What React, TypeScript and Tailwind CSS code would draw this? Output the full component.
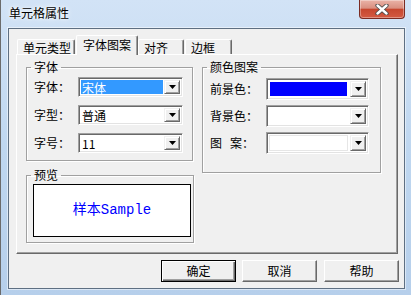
import type { ReactNode } from 'react';

const DropButton = () => (
  <div className="w-[16px] h-full flex items-center justify-center bg-[#f0f0f0] border border-t-[#f0f0f0] border-l-[#f0f0f0] border-r-[#696969] border-b-[#696969] shadow-[inset_1px_1px_0_#fff,inset_-1px_-1px_0_#a0a0a0]">
    <svg width="7" height="4" viewBox="0 0 7 4">
      <polygon points="0,0 7,0 3.5,4" fill="#000" />
    </svg>
  </div>
);

const Combo = ({ children, height }: { children?: ReactNode; height: string }) => (
  <div
    className={`${height} flex-1 flex bg-white p-[2px] border border-t-[#a0a0a0] border-l-[#a0a0a0] border-r-white border-b-white shadow-[inset_1px_1px_0_#696969,inset_-1px_-1px_0_#e3e3e3]`}
  >
    <div className="flex-1 min-w-0 flex">{children}</div>
    <DropButton />
  </div>
);

const Group = ({ title, className, children }: { title: string; className: string; children?: ReactNode }) => (
  <fieldset className={`${className} border border-[#a0a0a0] shadow-[inset_1px_1px_0_#fff,1px_1px_0_#fff]`}>
    <legend className="ml-[4px] px-[3px] leading-[14px]">{title}</legend>
    {children}
  </fieldset>
);

const Button = ({ label, primary }: { label: string; primary?: boolean }) => (
  <button
    className={`w-[75px] h-[22px] flex items-center justify-center leading-[14px] bg-[#f0f0f0] border ${
      primary
        ? 'border-black shadow-[inset_1px_1px_0_#fff,inset_-1px_-1px_0_#696969,inset_-2px_-2px_0_#a0a0a0]'
        : 'border-t-white border-l-white border-r-[#696969] border-b-[#696969] shadow-[inset_-1px_-1px_0_#a0a0a0]'
    }`}
  >
    {label}
  </button>
);

const tabBase =
  'h-[15px] pl-[5px] pt-[2px] leading-[12px] border border-b-0 border-t-white border-l-white border-r-[#696969] rounded-t-[2px] shadow-[inset_-1px_0_0_#a0a0a0]';

export default function App() {
  return (
    <div className="w-[411px] h-[295px] overflow-hidden bg-gradient-to-b from-[#d2e3f6] via-[#bfd7f0] to-[#b6cfeb] border-l border-[#6b6b6b] text-[12px] text-black font-['Noto_Sans_CJK_SC','Noto_Sans',sans-serif]">
      {/* Title bar */}
      <div className="h-[27px] flex items-start">
        <div className="pl-[8px] pt-[5px] leading-[15px] [text-shadow:0_0_6px_#fff,0_0_3px_#fff]">单元格属性</div>
        <div className="ml-auto mr-[6px] w-[46px] h-[19px] flex items-center justify-center rounded-b-[4px] border border-t-0 border-[#7b2b22] bg-[linear-gradient(to_bottom,#eab3a7_0%,#d98f80_45%,#c7472f_52%,#d45a42_100%)] shadow-[inset_0_0_0_1px_rgba(255,255,255,0.35)]">
          <svg width="14" height="11" viewBox="0 0 14 11">
            <path d="M2.5 1.5 L11.5 9.5 M11.5 1.5 L2.5 9.5" stroke="#4a4a4a" strokeWidth="4.2" strokeLinecap="round" />
            <path d="M2.5 1.5 L11.5 9.5 M11.5 1.5 L2.5 9.5" stroke="#fff" strokeWidth="2.4" strokeLinecap="round" />
          </svg>
        </div>
      </div>

      {/* Client area */}
      <div className="ml-[7px] mt-[1px] w-[397px] h-[261px] border border-[#5e6f82] bg-[#f0f0f0] shadow-[0_0_0_1px_rgba(255,255,255,0.5)] flex flex-col">
        {/* Tabs */}
        <div className="flex items-end pl-[8px] pt-[6px]">
          <div className={`${tabBase} w-[58px]`}>单元类型</div>
          <div className="relative z-10 ml-[1px] -mb-px w-[62px] h-[20px] pl-[6px] pt-[2px] leading-[13px] bg-[#f0f0f0] border border-b-0 border-t-white border-l-white border-r-[#696969] rounded-t-[2px] shadow-[inset_-1px_0_0_#a0a0a0]">
            字体图案
          </div>
          <div className={`${tabBase} w-[46px]`}>对齐</div>
          <div className={`${tabBase} ml-[1px] w-[47px]`}>边框</div>
        </div>

        {/* Tab panel */}
        <div className="ml-[7px] w-[382px] h-[200px] border border-t-white border-l-white border-r-[#696969] border-b-[#696969] shadow-[inset_-1px_-1px_0_#a0a0a0] flex gap-[8px] pl-[9px] pt-[5px]">
          <div className="w-[168px] flex flex-col gap-[7px]">
            <Group title="字体" className="w-[167px] h-[101px]">
              <div className="flex flex-col gap-[8px] mt-[3px] pl-[7px] pr-[9px]">
                <div className="flex items-center">
                  <span className="w-[44px]">字体：</span>
                  <Combo height="h-[20px]">
                    <div className="flex-1 mr-[1px] bg-[#3399ff] text-white leading-[14px] pl-[1px] pt-[1px]">宋体</div>
                  </Combo>
                </div>
                <div className="flex items-center">
                  <span className="w-[44px]">字型：</span>
                  <Combo height="h-[20px]">
                    <div className="pl-[1px] pt-[1px] leading-[14px]">普通</div>
                  </Combo>
                </div>
                <div className="flex items-center">
                  <span className="w-[44px]">字号：</span>
                  <Combo height="h-[20px]">
                    <div className="pl-[1px] pt-[1px] leading-[14px]">11</div>
                  </Combo>
                </div>
              </div>
            </Group>
            <Group title="预览" className="w-[168px] h-[75px]">
              <div className="ml-[6px] mt-[2px] w-[158px] h-[53px] bg-white border border-black flex items-center justify-center text-[#0000ff] text-[14px] font-['Liberation_Mono','Noto_Sans_CJK_SC',monospace]">
                样本Sample
              </div>
            </Group>
          </div>

          <Group title="颜色图案" className="w-[179px] h-[113px] mt-0">
            <div className="flex flex-col gap-[5px] mt-[4px] pl-[7px] pr-[11px]">
              <div className="flex items-center">
                <span className="w-[56px]">前景色：</span>
                <Combo height="h-[22px]">
                  <div className="flex-1 ml-[1px] mr-[3px] my-[1px] bg-[#0000ff]" />
                </Combo>
              </div>
              <div className="flex items-center">
                <span className="w-[56px]">背景色：</span>
                <Combo height="h-[22px]" />
              </div>
              <div className="flex items-center">
                <span className="w-[56px]">图&nbsp;&nbsp;&nbsp;案：</span>
                <Combo height="h-[22px]">
                  <div className="flex-1 mr-[2px] border border-[#e6e6e6]" />
                </Combo>
              </div>
            </div>
          </Group>
        </div>

        {/* Buttons */}
        <div className="flex justify-end gap-[6px] pr-[5px] mt-[6px]">
          <Button label="确定" primary />
          <Button label="取消" />
          <div className="ml-px">
            <Button label="帮助" />
          </div>
        </div>
      </div>
    </div>
  );
}
